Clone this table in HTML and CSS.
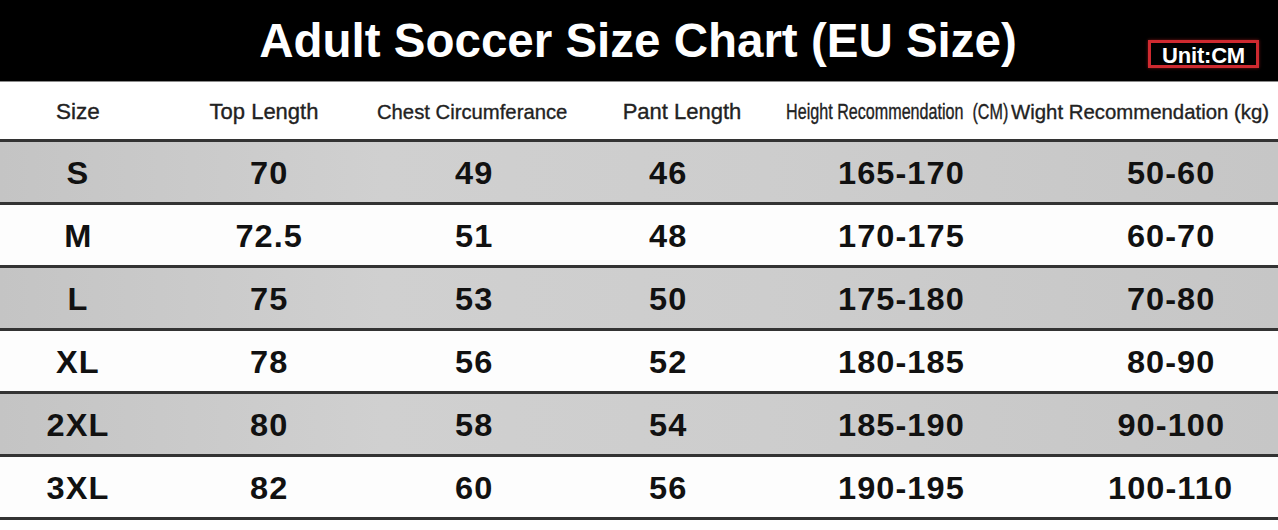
FILE: index.html
```html
<!DOCTYPE html>
<html lang="en">
<head>
<meta charset="utf-8">
<title>Adult Soccer Size Chart (EU Size)</title>
<link rel="stylesheet" href="styles.css">
</head>
<body>
<div class="chart">
  <header class="banner">
    <h1 class="title">Adult Soccer Size Chart (EU Size)</h1>
    <span class="unit">Unit:CM</span>
  </header>
  <div class="head-row">
    <div class="hcell"><span class="h-size">Size</span></div>
    <div class="hcell"><span class="h-top">Top Length</span></div>
    <div class="hcell"><span class="h-chest">Chest Circumferance</span></div>
    <div class="hcell"><span class="h-pant">Pant Length</span></div>
    <div class="hcell"><span class="h-height">Height Recommendation &nbsp;(CM)</span></div>
    <div class="hcell"><span class="h-weight">Wight Recommendation (kg)</span></div>
  </div>
  <div class="row shade">
    <div class="cell"><span>S</span></div><div class="cell"><span>70</span></div><div class="cell"><span>49</span></div><div class="cell"><span>46</span></div><div class="cell"><span>165-170</span></div><div class="cell last"><span>50-60</span></div>
  </div>
  <div class="row">
    <div class="cell"><span>M</span></div><div class="cell"><span>72.5</span></div><div class="cell"><span>51</span></div><div class="cell"><span>48</span></div><div class="cell"><span>170-175</span></div><div class="cell last"><span>60-70</span></div>
  </div>
  <div class="row shade">
    <div class="cell"><span>L</span></div><div class="cell"><span>75</span></div><div class="cell"><span>53</span></div><div class="cell"><span>50</span></div><div class="cell"><span>175-180</span></div><div class="cell last"><span>70-80</span></div>
  </div>
  <div class="row">
    <div class="cell"><span>XL</span></div><div class="cell"><span>78</span></div><div class="cell"><span>56</span></div><div class="cell"><span>52</span></div><div class="cell"><span>180-185</span></div><div class="cell last"><span>80-90</span></div>
  </div>
  <div class="row shade">
    <div class="cell"><span>2XL</span></div><div class="cell"><span>80</span></div><div class="cell"><span>58</span></div><div class="cell"><span>54</span></div><div class="cell"><span>185-190</span></div><div class="cell last"><span>90-100</span></div>
  </div>
  <div class="row">
    <div class="cell"><span>3XL</span></div><div class="cell"><span>82</span></div><div class="cell"><span>60</span></div><div class="cell"><span>56</span></div><div class="cell"><span>190-195</span></div><div class="cell last"><span>100-110</span></div>
  </div>
</div>
</body>
</html>
```
FILE: styles.css
```css
* { box-sizing: border-box; }
html, body {
  margin: 0;
  padding: 0;
  background: #ffffff;
}
body {
  width: 1278px;
  height: 530px;
  overflow: hidden;
  font-family: "Liberation Sans", Arial, sans-serif;
}
.chart {
  display: flex;
  flex-direction: column;
}
.banner {
  position: relative;
  height: 82px;
  background: #000;
  border-bottom: 1px solid #8a8a8a;
  display: flex;
  align-items: center;
  justify-content: center;
}
.title {
  margin: 0;
  color: #fff;
  font-size: 47.5px;
  font-weight: 700;
  line-height: 1;
  padding-right: 2px;
}
.unit {
  position: absolute;
  left: 1148px;
  top: 40px;
  width: 111px;
  height: 28px;
  border: 3px solid #cf2a30;
  box-shadow: 0 0 3px rgba(220, 40, 40, 0.55);
  color: #fff;
  font-weight: 700;
  font-size: 22px;
  line-height: 1;
  display: flex;
  align-items: center;
  justify-content: center;
  padding-top: 3px;
  letter-spacing: -0.2px;
}
.head-row {
  display: grid;
  grid-template-columns: 156px 216px 200px 220px 210px 276px;
  height: 60px;
  border-bottom: 3px solid #333;
  background: #fff;
}
.hcell {
  display: flex;
  align-items: center;
  justify-content: center;
  white-space: nowrap;
  color: #222;
  padding-top: 3px;
}
.hcell span {
  display: inline-block;
  -webkit-text-stroke: 0.35px #222;
}
.h-size { font-size: 22.5px; }
.h-top { font-size: 22px; }
.h-chest { font-size: 20.7px; transform: scaleX(0.98); }
.h-pant { font-size: 22px; }
.h-height { font-size: 21.5px; transform: scaleX(0.75); }
.h-weight { font-size: 21px; transform: scaleX(0.97); }
.row {
  display: grid;
  grid-template-columns: 154px 228px 182px 206px 260px 248px;
  height: 63px;
  border-bottom: 3px solid #333;
  background: #fdfdfd;
}
.row.shade {
  background: linear-gradient(90deg, #c4c4c4 0%, #d0d0d0 30%, #cdcdcd 60%, #c6c6c6 100%);
}
.cell {
  display: flex;
  align-items: center;
  justify-content: center;
  white-space: nowrap;
  font-size: 31px;
  font-weight: 700;
  color: #111;
  padding-left: 2px;
  padding-top: 4px;
}
.cell span {
  display: inline-block;
  letter-spacing: 1px;
  transform: scaleX(1.05);
}
.cell.last {
  padding-left: 34px;
}
```
